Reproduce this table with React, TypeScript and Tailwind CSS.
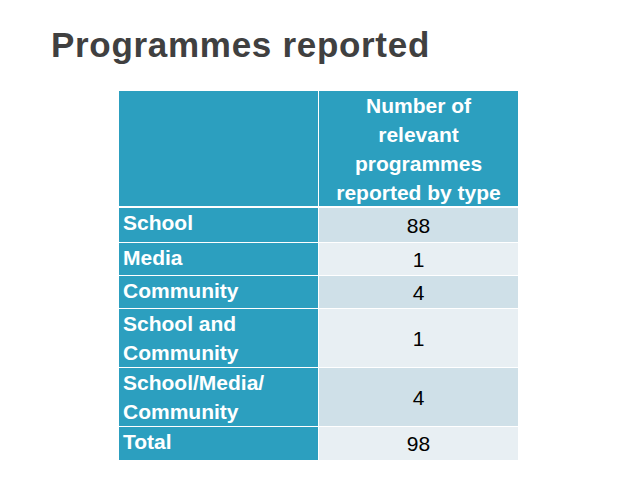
const rows = [
  { label: ['School'], value: '88', h: 'h-[34px]', shade: 'bg-[#cfe0e8]' },
  { label: ['Media'], value: '1', h: 'h-[32px]', shade: 'bg-[#e8eff3]' },
  { label: ['Community'], value: '4', h: 'h-[32px]', shade: 'bg-[#cfe0e8]' },
  { label: ['School and', 'Community'], value: '1', h: 'h-[58px]', shade: 'bg-[#e8eff3]' },
  { label: ['School/Media/', 'Community'], value: '4', h: 'h-[58px]', shade: 'bg-[#cfe0e8]' },
  { label: ['Total'], value: '98', h: 'h-[33px]', shade: 'bg-[#e8eff3]' },
];

export default function App() {
  return (
    <div className="w-[638px] h-[479px] bg-white overflow-hidden font-['Liberation_Sans',Arial,sans-serif]">
      <h1 className="pt-[25px] pl-[51px] text-[35px] leading-[40px] font-bold tracking-[0.7px] text-[#404040]">
        Programmes reported
      </h1>

      <div className="mt-[26px] ml-[119px] w-[399px] flex flex-col">
        {/* header */}
        <div className="flex gap-x-[1px] h-[115px] mb-[2px]">
          <div className="w-[199px] bg-[#2c9fbf]" />
          <div className="w-[199px] bg-[#2c9fbf] flex flex-col items-center text-white font-bold text-[21px] leading-[29px]">
            <span>Number of</span>
            <span>relevant</span>
            <span>programmes</span>
            <span>reported by type</span>
          </div>
        </div>

        <div className="flex flex-col gap-y-[1px]">
          {rows.map((r) => (
            <div key={r.value + r.label.join()} className={`flex gap-x-[1px] ${r.h}`}>
              <div className="w-[199px] bg-[#2c9fbf] pl-[4px] flex flex-col text-white font-bold text-[21px] leading-[29px]">
                {r.label.map((l) => (
                  <span key={l}>{l}</span>
                ))}
              </div>
              <div className={`w-[199px] ${r.shade} flex items-center justify-center text-black text-[21px] leading-[29px]`}>
                {r.value}
              </div>
            </div>
          ))}
        </div>
      </div>
    </div>
  );
}
